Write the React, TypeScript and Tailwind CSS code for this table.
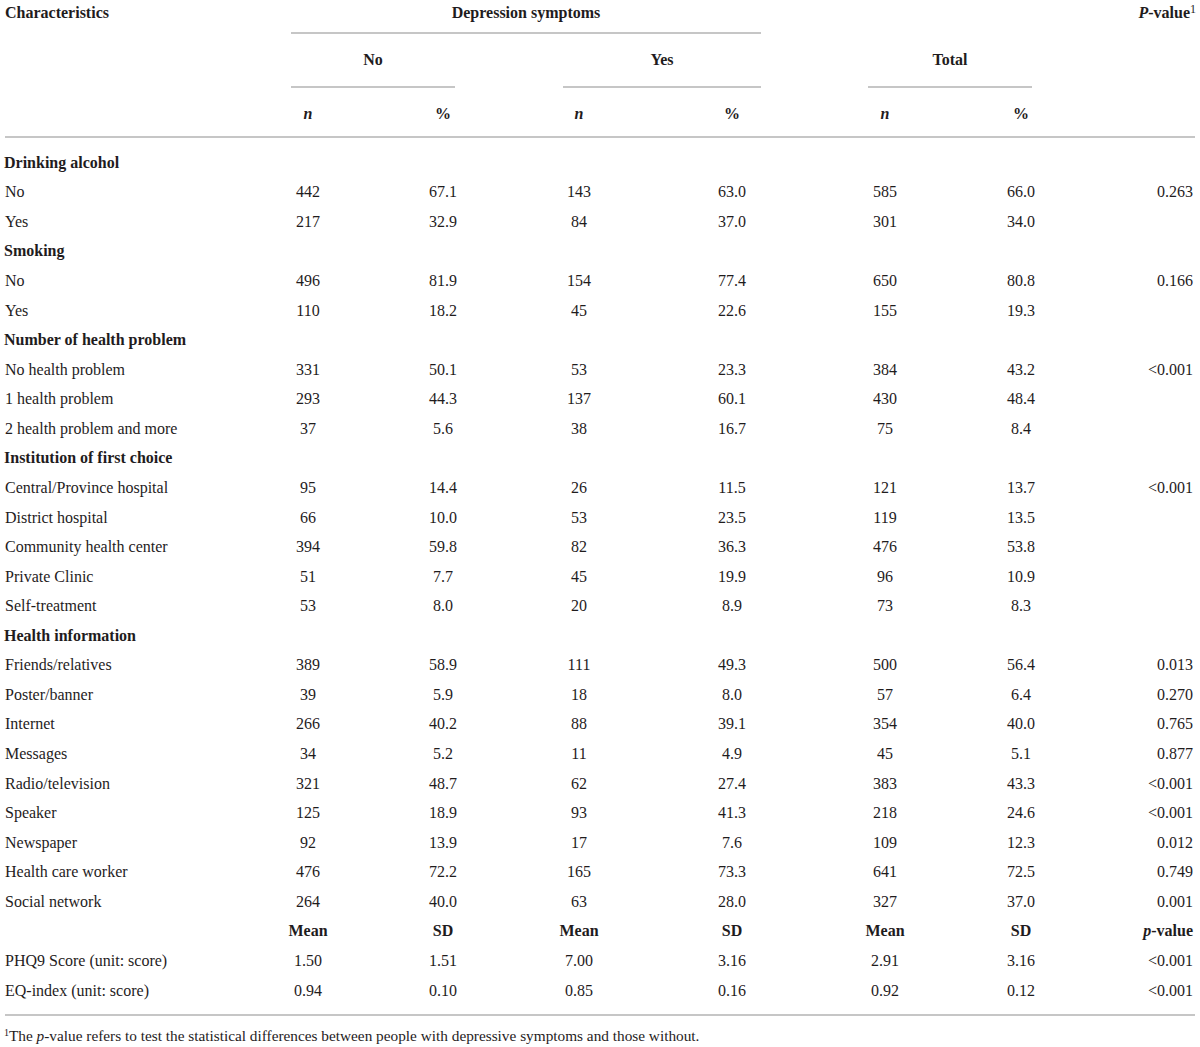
import React from "react";

type Row =
  | { kind: "section"; label: string }
  | { kind: "data"; label: string; v: string[]; p?: string }
  | { kind: "meanhead" };

const rows: Row[] = [
  { kind: "section", label: "Drinking alcohol" },
  { kind: "data", label: "No", v: ["442", "67.1", "143", "63.0", "585", "66.0"], p: "0.263" },
  { kind: "data", label: "Yes", v: ["217", "32.9", "84", "37.0", "301", "34.0"] },
  { kind: "section", label: "Smoking" },
  { kind: "data", label: "No", v: ["496", "81.9", "154", "77.4", "650", "80.8"], p: "0.166" },
  { kind: "data", label: "Yes", v: ["110", "18.2", "45", "22.6", "155", "19.3"] },
  { kind: "section", label: "Number of health problem" },
  { kind: "data", label: "No health problem", v: ["331", "50.1", "53", "23.3", "384", "43.2"], p: "<0.001" },
  { kind: "data", label: "1 health problem", v: ["293", "44.3", "137", "60.1", "430", "48.4"] },
  { kind: "data", label: "2 health problem and more", v: ["37", "5.6", "38", "16.7", "75", "8.4"] },
  { kind: "section", label: "Institution of first choice" },
  { kind: "data", label: "Central/Province hospital", v: ["95", "14.4", "26", "11.5", "121", "13.7"], p: "<0.001" },
  { kind: "data", label: "District hospital", v: ["66", "10.0", "53", "23.5", "119", "13.5"] },
  { kind: "data", label: "Community health center", v: ["394", "59.8", "82", "36.3", "476", "53.8"] },
  { kind: "data", label: "Private Clinic", v: ["51", "7.7", "45", "19.9", "96", "10.9"] },
  { kind: "data", label: "Self-treatment", v: ["53", "8.0", "20", "8.9", "73", "8.3"] },
  { kind: "section", label: "Health information" },
  { kind: "data", label: "Friends/relatives", v: ["389", "58.9", "111", "49.3", "500", "56.4"], p: "0.013" },
  { kind: "data", label: "Poster/banner", v: ["39", "5.9", "18", "8.0", "57", "6.4"], p: "0.270" },
  { kind: "data", label: "Internet", v: ["266", "40.2", "88", "39.1", "354", "40.0"], p: "0.765" },
  { kind: "data", label: "Messages", v: ["34", "5.2", "11", "4.9", "45", "5.1"], p: "0.877" },
  { kind: "data", label: "Radio/television", v: ["321", "48.7", "62", "27.4", "383", "43.3"], p: "<0.001" },
  { kind: "data", label: "Speaker", v: ["125", "18.9", "93", "41.3", "218", "24.6"], p: "<0.001" },
  { kind: "data", label: "Newspaper", v: ["92", "13.9", "17", "7.6", "109", "12.3"], p: "0.012" },
  { kind: "data", label: "Health care worker", v: ["476", "72.2", "165", "73.3", "641", "72.5"], p: "0.749" },
  { kind: "data", label: "Social network", v: ["264", "40.0", "63", "28.0", "327", "37.0"], p: "0.001" },
  { kind: "meanhead" },
  { kind: "data", label: "PHQ9 Score (unit: score)", v: ["1.50", "1.51", "7.00", "3.16", "2.91", "3.16"], p: "<0.001" },
  { kind: "data", label: "EQ-index (unit: score)", v: ["0.94", "0.10", "0.85", "0.16", "0.92", "0.12"], p: "<0.001" },
];

const gridCols = "grid grid-cols-[240px_136px_134px_138px_168px_138px_134px_112px]";
const line = "h-[2px] bg-[#c6c6c6]";

export default function App() {
  return (
    <div
      className="w-[1200px] h-[1047px] bg-white text-[#1f1c1d] text-[16px] leading-none overflow-hidden"
      style={{ fontFamily: '"Liberation Serif", "Times New Roman", serif' }}
    >
      {/* Header */}
      <div className={gridCols}>
        {/* Row A */}
        <div className="col-start-1 row-start-1 pl-[5px] pt-[5px] h-[32px] font-bold">Characteristics</div>
        <div className="col-start-2 col-span-4 row-start-1 ml-[51px] mr-[55px] flex flex-col">
          <div className="h-[32px] pt-[5px] text-center font-bold">Depression symptoms</div>
        </div>
        <div className="col-start-8 row-start-1 pr-[4px] pt-[5px] text-right font-bold">
          <i>P</i>-value<span className="text-[12px] font-normal relative -top-[5px]">1</span>
        </div>
        {/* line under Depression symptoms */}
        <div className={`col-start-2 col-span-4 row-start-2 ml-[51px] mr-[55px] ${line}`} />
        {/* Row B */}
        <div className="col-start-2 col-span-2 row-start-3 ml-[51px] mr-[55px] h-[52px] flex items-center justify-center font-bold">No</div>
        <div className="col-start-4 col-span-2 row-start-3 ml-[53px] mr-[55px] h-[52px] flex items-center justify-center font-bold">Yes</div>
        <div className="col-start-6 col-span-2 row-start-3 ml-[52px] mr-[56px] h-[52px] flex items-center justify-center font-bold">Total</div>
        <div className={`col-start-2 col-span-2 row-start-4 ml-[51px] mr-[55px] ${line}`} />
        <div className={`col-start-4 col-span-2 row-start-4 ml-[53px] mr-[55px] ${line}`} />
        <div className={`col-start-6 col-span-2 row-start-4 ml-[52px] mr-[56px] ${line}`} />
        {/* Row C */}
        {["n", "%", "n", "%", "n", "%"].map((t, i) => (
          <div key={i} className="row-start-5 h-[48px] pt-[3px] flex items-center justify-center font-bold" style={{ gridColumnStart: i + 2 }}>
            {t === "n" ? <i>n</i> : t}
          </div>
        ))}
      </div>
      <div className={`mx-[5px] ${line}`} />

      {/* Body */}
      <div className="mt-[10px]">
        {rows.map((r, idx) => {
          if (r.kind === "section") {
            return (
              <div key={idx} className={`${gridCols} h-[29.57px] items-center`}>
                <div className="col-span-8 pl-[4px] font-bold whitespace-nowrap">{r.label}</div>
              </div>
            );
          }
          if (r.kind === "meanhead") {
            return (
              <div key={idx} className={`${gridCols} h-[29.57px] items-center font-bold`}>
                <div />
                {["Mean", "SD", "Mean", "SD", "Mean", "SD"].map((t, i) => (
                  <div key={i} className="text-center">{t}</div>
                ))}
                <div className="text-right pr-[7px]">
                  <i>p</i>-value
                </div>
              </div>
            );
          }
          return (
            <div key={idx} className={`${gridCols} h-[29.57px] items-center`}>
              <div className="pl-[5px] whitespace-nowrap">{r.label}</div>
              {r.v.map((t, i) => (
                <div key={i} className="text-center">{t}</div>
              ))}
              <div className="text-right pr-[7px]">{r.p ?? ""}</div>
            </div>
          );
        })}
      </div>

      <div className={`mx-[5px] mt-[9px] ${line}`} />
      <div className="pl-[4px] pt-[12px] text-[15.3px] whitespace-nowrap">
        <span className="text-[10px] relative -top-[5px]">1</span>The <i>p</i>-value refers to test the statistical differences between people with depressive symptoms and those without.
      </div>
    </div>
  );
}
